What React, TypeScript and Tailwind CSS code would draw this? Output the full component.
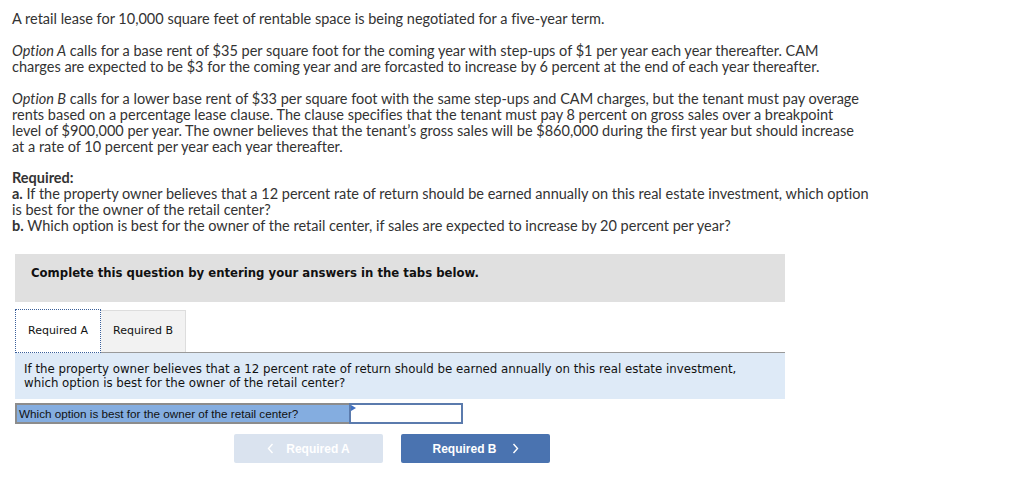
import React from "react";

const body = { fontFamily: "Lato, 'Open Sans', sans-serif" };
const tahoma = { fontFamily: "'DejaVu Sans', Verdana, sans-serif" };
const arial = { fontFamily: "'Liberation Sans', Arial, sans-serif" };

function Chevron({ dir }: { dir: "left" | "right" }) {
  return (
    <svg width="7" height="11" viewBox="0 0 7 11" fill="none">
      <path
        d={dir === "left" ? "M5.5 1 L1.5 5.5 L5.5 10" : "M1.5 1 L5.5 5.5 L1.5 10"}
        stroke="white"
        strokeWidth="1.4"
      />
    </svg>
  );
}

export default function App() {
  return (
    <div className="w-[1024px] h-[494px] bg-white text-[#333] overflow-hidden">
      <div
        style={body}
        className="pl-[12px] pt-[11px] text-[14.5px] leading-[16px] whitespace-nowrap [font-variant-ligatures:none]"
      >
        <p>A retail lease for 10,000 square feet of rentable space is being negotiated for a five-year term.</p>
        <p className="mt-[16px]">
          <i>Option A</i> calls for a base rent of $35 per square foot for the coming year with step-ups of $1 per year each year thereafter. CAM
          <br />
          charges are expected to be $3 for the coming year and are forcasted to increase by 6 percent at the end of each year thereafter.
        </p>
        <p className="mt-[16px]">
          <i>Option B</i> calls for a lower base rent of $33 per square foot with the same step-ups and CAM charges, but the tenant must pay overage
          <br />
          rents based on a percentage lease clause. The clause specifies that the tenant must pay 8 percent on gross sales over a breakpoint
          <br />
          level of $900,000 per year. The owner believes that the tenant’s gross sales will be $860,000 during the first year but should increase
          <br />
          at a rate of 10 percent per year each year thereafter.
        </p>
        <div className="mt-[15px]">
          <b>Required:</b>
          <br />
          <b>a.</b> If the property owner believes that a 12 percent rate of return should be earned annually on this real estate investment, which option
          <br />
          is best for the owner of the retail center?
          <br />
          <b>b.</b> Which option is best for the owner of the retail center, if sales are expected to increase by 20 percent per year?
        </div>
      </div>

      <div className="ml-[15px] w-[770px]">
        <div className="mt-[20px] h-[48px] bg-[#e0e0e0] pl-[16px] pt-[12px]">
          <p style={tahoma} className="text-[11.7px] leading-[14px] font-bold text-[#111]">
            Complete this question by entering your answers in the tabs below.
          </p>
        </div>

        <div className="mt-[7px] flex items-end h-[44px]">
          <div
            style={tahoma}
            className="relative z-10 h-[44px] w-[86px] bg-white border border-dotted border-[#3a5f9a] flex items-center justify-center text-[11px] text-[#111]"
          >
            Required A
          </div>
          <div
            style={tahoma}
            className="h-[42px] w-[85px] mb-[1px] bg-[#f2f2f2] border-t border-r border-[#dddddd] flex items-center justify-center text-[11px] text-[#111]"
          >
            Required B
          </div>
        </div>
        <div className="-mt-[1px] border-t border-[#999999] bg-[#deeaf7] h-[47px] pl-[9px] pt-[9px]">
          <p style={tahoma} className="text-[11.8px] leading-[14px] text-[#111] whitespace-nowrap">
            If the property owner believes that a 12 percent rate of return should be earned annually on this real estate investment,
            <br />
            which option is best for the owner of the retail center?
          </p>
        </div>

        <div className="mt-[4px] flex h-[21px]">
          <div
            style={arial}
            className="w-[334px] bg-[#84ade0] border-2 border-r-0 border-[#8c8c8c] flex items-center pl-[2px] text-[11.7px] text-[#111]"
          >
            Which option is best for the owner of the retail center?
          </div>
          <div className="relative w-[114px] bg-white border-2 border-[#5b7bad]">
            <svg className="absolute left-0 top-0" width="6" height="6" viewBox="0 0 6 6">
              <path d="M0 0 L5 3 L0 6 Z" fill="#3f6fc2" />
            </svg>
          </div>
        </div>

        <div className="mt-[10px] flex ml-[219px] gap-[18px]">
          <div
            style={arial}
            className="w-[149px] h-[29px] rounded-[2px] bg-[#dae3ef] flex items-center justify-center text-white text-[12px] font-bold"
          >
            <span className="mr-[12px] flex">
              <Chevron dir="left" />
            </span>
            Required A
          </div>
          <div
            style={arial}
            className="w-[149px] h-[29px] rounded-[2px] bg-[#4a73b0] flex items-center justify-center text-white text-[12px] font-bold"
          >
            Required B
            <span className="ml-[15px] flex">
              <Chevron dir="right" />
            </span>
          </div>
        </div>
      </div>
    </div>
  );
}
